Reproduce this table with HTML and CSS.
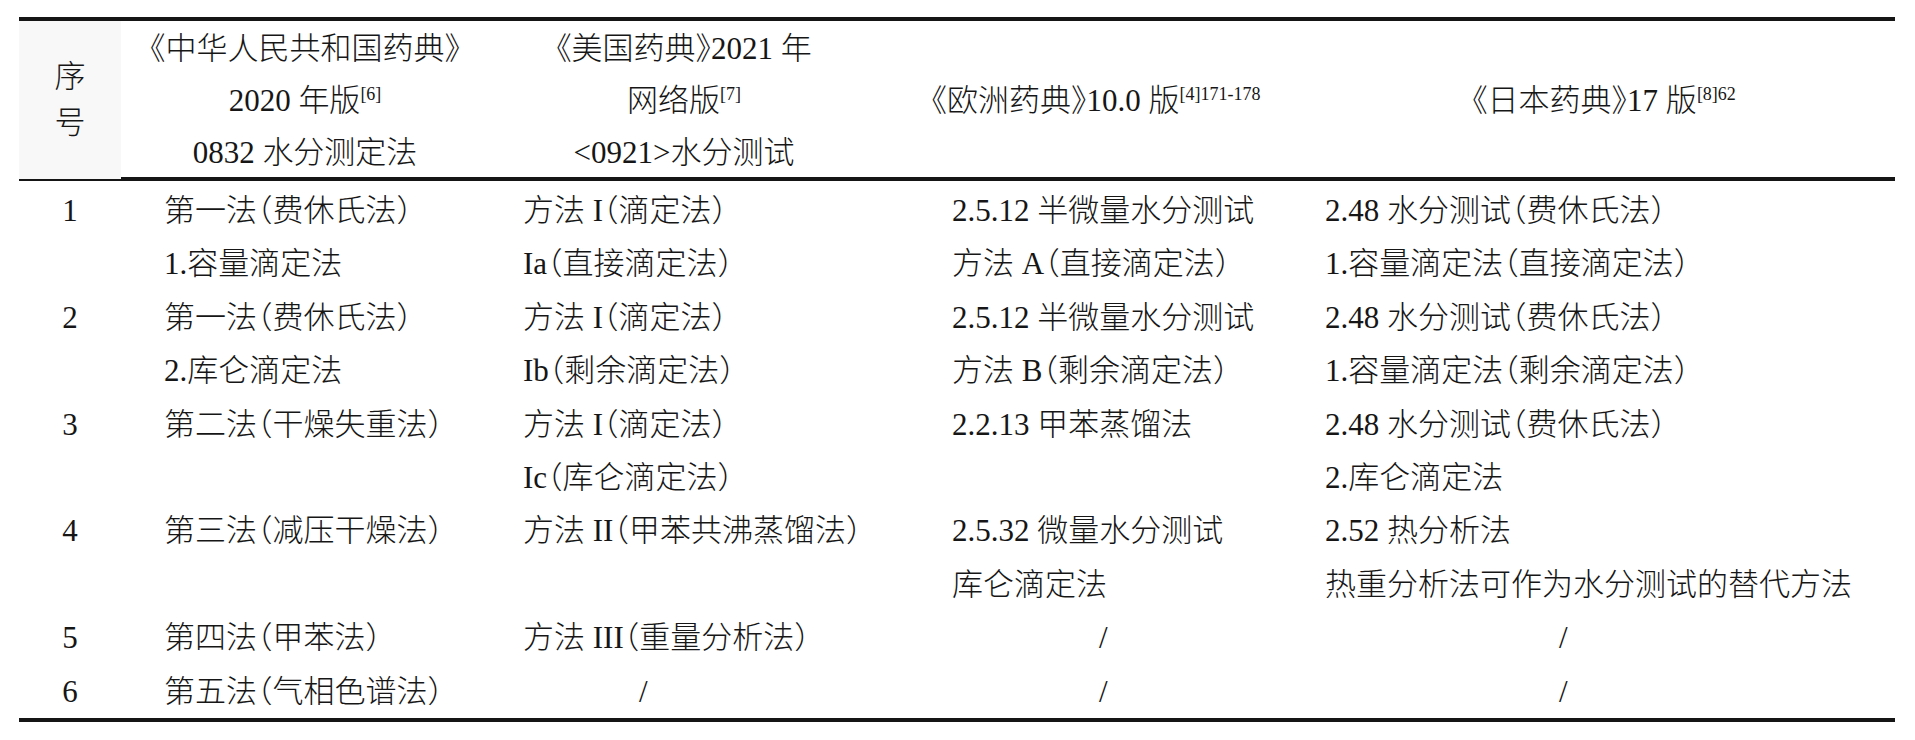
FILE: index.html
```html
<!DOCTYPE html>
<html lang="zh-CN">
<head>
<meta charset="utf-8">
<title>水分测定法对比</title>
<link rel="stylesheet" href="styles.css">
</head>
<body>
<div class="table">
  <div class="head">
    <div class="hc seq">序<br>号</div>
    <div class="hc">《中华人民共和国药典》<br>2020 年版<span class="sup">[6]</span><br>0832 水分测定法</div>
    <div class="hc">《美国药典》2021 年<br>网络版<span class="sup">[7]</span><br>&lt;0921&gt;水分测试</div>
    <div class="hc">《欧洲药典》10.0 版<span class="sup">[4]171-178</span></div>
    <div class="hc">《日本药典》17 版<span class="sup">[8]62</span></div>
  </div>
  <div class="body">
    <div class="cell b1">1</div>
    <div class="cell b2">第一法（费休氏法）<br>1.容量滴定法</div>
    <div class="cell b3">方法 I（滴定法）<br>Ia（直接滴定法）</div>
    <div class="cell b4">2.5.12 半微量水分测试<br>方法 A（直接滴定法）</div>
    <div class="cell b5">2.48 水分测试（费休氏法）<br>1.容量滴定法（直接滴定法）</div>

    <div class="cell b1">2</div>
    <div class="cell b2">第一法（费休氏法）<br>2.库仑滴定法</div>
    <div class="cell b3">方法 I（滴定法）<br>Ib（剩余滴定法）</div>
    <div class="cell b4">2.5.12 半微量水分测试<br>方法 B（剩余滴定法）</div>
    <div class="cell b5">2.48 水分测试（费休氏法）<br>1.容量滴定法（剩余滴定法）</div>

    <div class="cell b1">3</div>
    <div class="cell b2">第二法（干燥失重法）</div>
    <div class="cell b3">方法 I（滴定法）<br>Ic（库仑滴定法）</div>
    <div class="cell b4">2.2.13 甲苯蒸馏法</div>
    <div class="cell b5">2.48 水分测试（费休氏法）<br>2.库仑滴定法</div>

    <div class="cell b1">4</div>
    <div class="cell b2">第三法（减压干燥法）</div>
    <div class="cell b3">方法 II（甲苯共沸蒸馏法）</div>
    <div class="cell b4">2.5.32 微量水分测试<br>库仑滴定法</div>
    <div class="cell b5">2.52 热分析法<br>热重分析法可作为水分测试的替代方法</div>

    <div class="cell b1">5</div>
    <div class="cell b2">第四法（甲苯法）</div>
    <div class="cell b3">方法 III（重量分析法）</div>
    <div class="cell s4">/</div>
    <div class="cell s5">/</div>

    <div class="cell b1">6</div>
    <div class="cell b2">第五法（气相色谱法）</div>
    <div class="cell s3">/</div>
    <div class="cell s4">/</div>
    <div class="cell s5">/</div>
  </div>
</div>
</body>
</html>
```

FILE: styles.css
```css
html, body {
  margin: 0;
  padding: 0;
  background: #ffffff;
}

body {
  color: #161616;
  font-family: "Liberation Serif", "Noto Sans CJK SC", serif;
  font-size: 31px;
  font-weight: 300;
  font-feature-settings: "halt";
}

.table {
  margin: 17px 0 0 19px;
  width: 1876px;
}

.head {
  display: grid;
  grid-template-columns: 102px 368px 390px 434px 582px;
  height: 156px;
  border-top: 4px solid #151515;
  border-bottom: 4px solid #151515;
  align-items: center;
  text-align: center;
  line-height: 52px;
  white-space: nowrap;
}

.hc {
  padding-top: 2px;
}

.seq {
  align-self: stretch;
  display: flex;
  align-items: center;
  justify-content: center;
  line-height: 46px;
  background: #f8f8f8;
  padding-top: 0;
}

.sup {
  font-size: 18px;
  line-height: 0;
  vertical-align: 11px;
}

.body {
  display: grid;
  grid-template-columns: 102px 368px 390px 434px 582px;
  padding-top: 3px;
  border-bottom: 4px solid #151515;
  line-height: 53.4px;
  white-space: nowrap;
}

.b1 {
  text-align: center;
}

.b2 {
  padding-left: 43px;
}

.b3 {
  padding-left: 34px;
}

.b4 {
  padding-left: 73px;
}

.b5 {
  padding-left: 12px;
}

.s3 {
  padding-left: 150px;
}

.s4 {
  padding-left: 220px;
}

.s5 {
  padding-left: 246px;
}
```
